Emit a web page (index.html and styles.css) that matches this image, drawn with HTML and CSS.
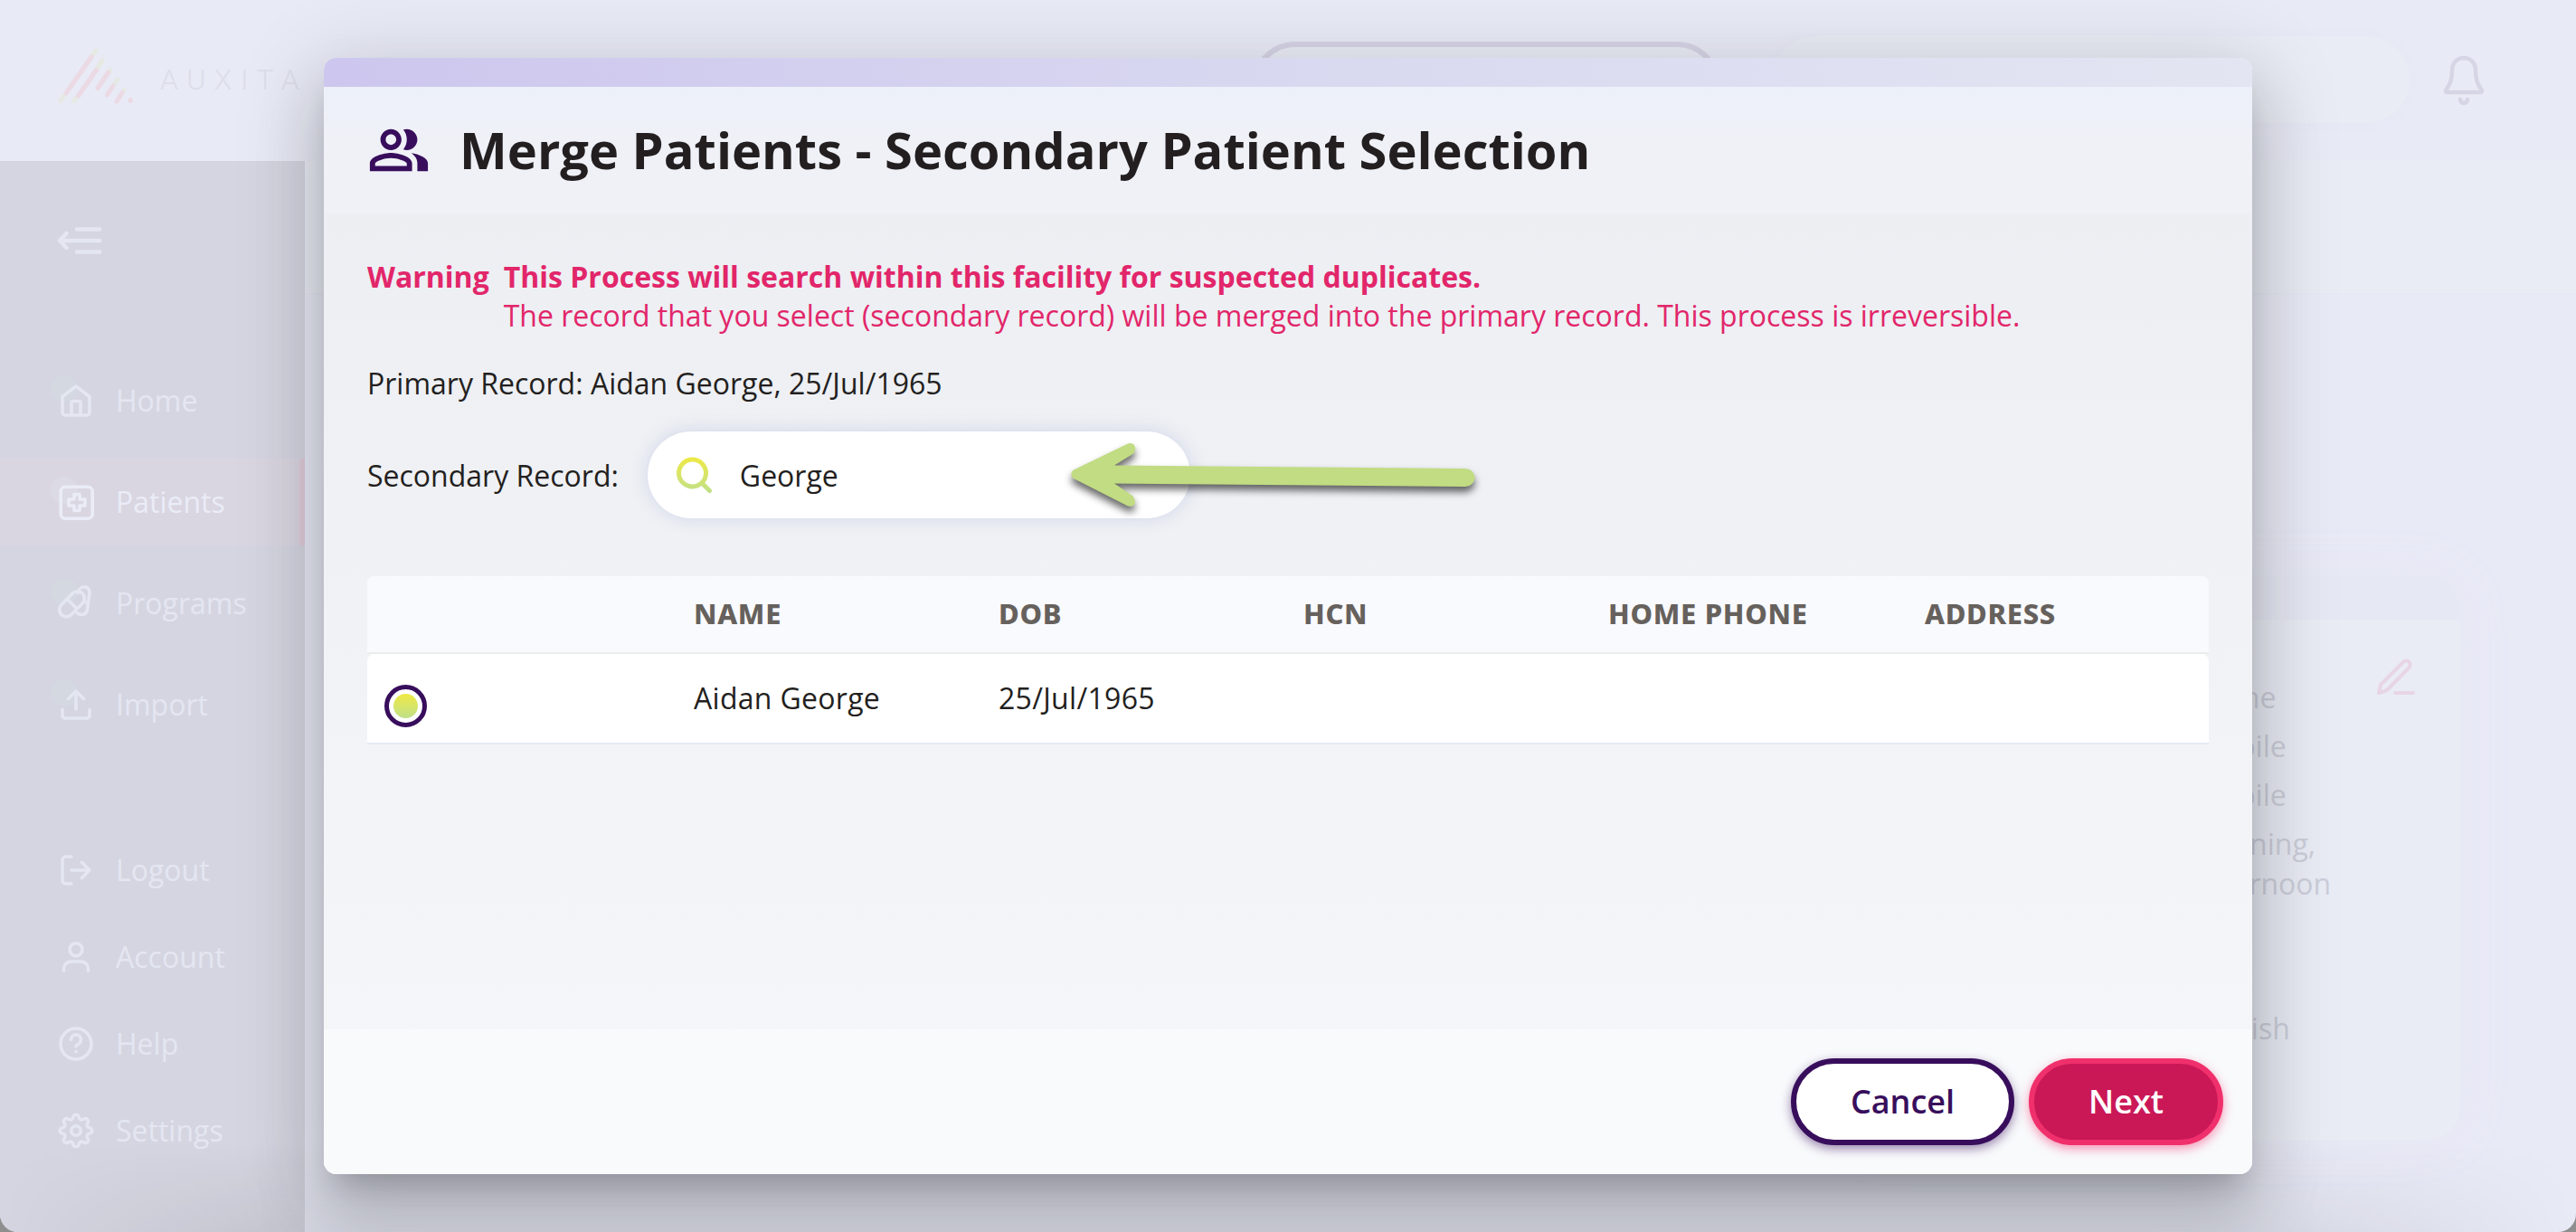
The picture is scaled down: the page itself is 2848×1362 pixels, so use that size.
FILE: index.html
```html
<!DOCTYPE html>
<html lang="en">
<head>
    <meta charset="UTF-8">
    <meta name="viewport" content="width=device-width, initial-scale=1.0">
    <title>Merge Patients</title>
    <link rel="stylesheet" href="styles.css">
</head>
<body>

    <div class="app">
        <!-- Top bar -->
        <header class="topbar">
            <div class="logo">
                <svg class="logo-mark" width="88" height="66" viewBox="64 52 88 66">
                    <g class="logo-yellow">
                        <path d="M67 111.5l3-5.500M102.500 61l3.500-5M82 111.500l2-3.500M107.500 75l6-8.500M120.500 79.500l1.500-2M126.500 93l3.500-5M136 101.500l1-2"/>
                    </g>
                    <g class="logo-pink">
                        <path d="M73 103l28-40M86.500 106l20-28.500M108 97.500l11.500-17M118.500 105l6.500-10M129 112l6-9.500M144.300 110.500v1"/>
                    </g>
                </svg>
                <span class="logo-text">AUXITA</span>
            </div>
            <div class="facility-button"></div>
            <div class="top-search"></div>
            <svg class="bell" width="48" height="56" viewBox="0 0 48 56">
                <path d="M24 4c-8 0-13 6-13 14 0 10-2 15-7 22 0 1.500.5 2 2 2h36c1.500 0 2-.5 2-2-5-7-7-12-7-22 0-8-5-14-13-14z"/>
                <path d="M20 50a4 4 0 0 0 8 0"/>
            </svg>
        </header>

        <div class="main">
            <!-- Sidebar -->
            <nav class="sidebar">
                <svg class="collapse" width="50" height="32" viewBox="0 0 50 32">
                    <path d="M3 16h44M22 3.500h25M22 28.500h25M10.500 8L3 16l7.500 8"/>
                </svg>
                <div class="nav-group">
                    <a class="nav-item">
                        <svg class="nav-icon" viewBox="0 0 48 48">
                            <circle class="blob" cx="11" cy="11" r="15"/>
                            <path d="M9 19.500L24 8l15 11.500V37a3 3 0 0 1-3 3H12a3 3 0 0 1-3-3zM19 40V26a1.500 1.500 0 0 1 1.500-1.500h7A1.500 1.500 0 0 1 29 26v14"/>
                        </svg>
                        <span>Home</span>
                    </a>
                    <a class="nav-item active">
                        <svg class="nav-icon" viewBox="0 0 48 48">
                            <circle class="blob" cx="11" cy="11" r="15"/>
                            <rect x="7.200" y="7.200" width="35" height="35" rx="5"/>
                            <path d="M22 15.500h6V21h6v7h-6v5.500h-6V28h-6v-7h6z"/>
                        </svg>
                        <span>Patients</span>
                    </a>
                    <a class="nav-item">
                        <svg class="nav-icon" viewBox="0 0 48 48">
                            <circle class="blob" cx="11" cy="11" r="15"/>
                            <rect x="3" y="17" width="33" height="15.500" rx="7.750" transform="rotate(-45 19.500 24.750)"/>
                            <path d="M14.500 19.500l10.500 10.500M26 12.500c1.500-5 5-7.500 8.500-6.500 3.500 1 5 4 4.500 7l-2.500 18c-1 6-7 7-11.500 3.500M32.500 22.500l5 .8"/>
                        </svg>
                        <span>Programs</span>
                    </a>
                    <a class="nav-item">
                        <svg class="nav-icon" viewBox="0 0 48 48">
                            <circle class="blob" cx="11" cy="11" r="15"/>
                            <path d="M24 29V9M15.500 17.500L24 9l8.500 8.500M9 29.500V36a3 3 0 0 0 3 3h24a3 3 0 0 0 3-3v-6.500"/>
                        </svg>
                        <span>Import</span>
                    </a>
                </div>
                <div class="nav-group nav-bottom">
                    <a class="nav-item">
                        <svg class="nav-icon" viewBox="0 0 48 48">
                            <path d="M19 9h-6a4 4 0 0 0-4 4v22a4 4 0 0 0 4 4h6M19 24h20M30.500 15.500L39 24l-8.500 8.500"/>
                        </svg>
                        <span>Logout</span>
                    </a>
                    <a class="nav-item">
                        <svg class="nav-icon" viewBox="0 0 48 48">
                            <circle cx="24" cy="15.700" r="7"/>
                            <path d="M10.500 39v-2a8 8 0 0 1 8-8h11a8 8 0 0 1 8 8v2"/>
                        </svg>
                        <span>Account</span>
                    </a>
                    <a class="nav-item">
                        <svg class="nav-icon" viewBox="0 0 48 48">
                            <circle cx="24" cy="24" r="17"/>
                            <path d="M18.500 19.500a5.500 5.500 0 1 1 8.500 4.500c-2 1.200-3 2-3 3M24 32.500v.1"/>
                        </svg>
                        <span>Help</span>
                    </a>
                    <a class="nav-item">
                        <svg class="nav-icon" viewBox="-24 -24 48 48">
                            <circle r="5.200"/>
                            <path d="M-3.300-14.500A3.300 3.300 0 0 1 3.300-14.500A2.900 2.900 0 0 0 7.920-12.590A3.300 3.300 0 0 1 12.590-7.920A2.900 2.900 0 0 0 14.500-3.300A3.300 3.300 0 0 1 14.500 3.300A2.900 2.900 0 0 0 12.590 7.920A3.300 3.300 0 0 1 7.920 12.590A2.900 2.900 0 0 0 3.300 14.500A3.300 3.300 0 0 1-3.300 14.500A2.900 2.900 0 0 0-7.920 12.590A3.300 3.300 0 0 1-12.590 7.920A2.900 2.900 0 0 0-14.500 3.300A3.300 3.300 0 0 1-14.500-3.300A2.900 2.900 0 0 0-12.590-7.920A3.300 3.300 0 0 1-7.920-12.590A2.900 2.900 0 0 0-3.300-14.500z"/>
                        </svg>
                        <span>Settings</span>
                    </a>
                </div>
            </nav>

            <!-- Page content behind the dialog -->
            <div class="content">
                <div class="patient-bar"></div>
                <div class="patient-card">
                    <div class="card-strip"></div>
                    <div class="card-body">
                        <div class="card-values">
                            <p>Home</p>
                            <p>Mobile</p>
                            <p>Mobile</p>
                            <p>Morning,<br>Afternoon</p>
                            <p class="language">English</p>
                        </div>
                        <svg class="edit" width="44" height="44" viewBox="0 0 44 44">
                            <path d="M4 40l2-9L31 6c2-2 5-2 6.500 0s1.500 4 0 6L14 36c-2 2-6 3-10 4zM22 40h20"/>
                        </svg>
                    </div>
                </div>
            </div>
        </div>
    </div>

    <!-- Dialog -->
    <div class="dialog">
        <div class="dialog-strip"></div>
        <div class="dialog-header">
            <svg class="people" width="70" height="70" viewBox="0 0 24 24">
                <path d="M16.670 13.130C18.040 14.060 19 15.320 19 17v3h4v-3c0-2.180-3.570-3.470-6.330-3.870z"/>
                <path d="M15 12c2.210 0 4-1.790 4-4s-1.790-4-4-4c-.47 0-.91.1-1.330.24C14.500 5.270 15 6.580 15 8s-.5 2.730-1.330 3.760c.42.14.86.24 1.330.24z"/>
                <path d="M9 12c2.210 0 4-1.790 4-4s-1.790-4-4-4-4 1.790-4 4 1.790 4 4 4zm0-6c1.100 0 2 .9 2 2s-.9 2-2 2-2-.9-2-2 .9-2 2-2zM9 13c-2.670 0-8 1.340-8 4v3h16v-3c0-2.660-5.330-4-8-4zm6 5H3v-.99C3.200 16.290 6.300 15 9 15s5.800 1.290 6 2v1z"/>
            </svg>
            <h1>Merge Patients - Secondary Patient Selection</h1>
        </div>

        <div class="dialog-body">
            <div class="warning">
                <strong>Warning</strong>
                <div>
                    <strong>This Process will search within this facility for suspected duplicates.</strong><br>
                    The record that you select (secondary record) will be merged into the primary record. This process is irreversible.
                </div>
            </div>
            <div class="primary">Primary Record: Aidan George, 25/Jul/1965</div>
            <div class="secondary">
                <span class="label">Secondary Record:</span>
                <div class="search">
                    <svg width="40" height="40" viewBox="0 0 40 40">
                        <defs>
                            <linearGradient id="lime" x1="0" y1="0" x2="0" y2="40" gradientUnits="userSpaceOnUse">
                                <stop offset="0" stop-color="#f0e944"/>
                                <stop offset="1" stop-color="#bfe08a"/>
                            </linearGradient>
                        </defs>
                        <path d="M17.500 3a15 15 0 1 1 0 30a15 15 0 1 1 0-30zM28.500 29.500l8 8" fill="none" stroke="url(#lime)" stroke-width="5" stroke-linecap="round"/>
                    </svg>
                    <span class="label">George</span>
                </div>
            </div>

            <div class="table">
                <div class="row head">
                    <span></span>
                    <span>NAME</span>
                    <span>DOB</span>
                    <span>HCN</span>
                    <span>HOME PHONE</span>
                    <span>ADDRESS</span>
                </div>
                <div class="row">
                    <span class="radio"></span>
                    <span>Aidan George</span>
                    <span>25/Jul/1965</span>
                    <span></span>
                    <span></span>
                    <span></span>
                </div>
            </div>
        </div>

        <div class="dialog-footer">
            <button class="cancel">Cancel</button>
            <button class="next">Next</button>
        </div>
    </div>

    <!-- Arrow pointing at the search box -->
    <svg class="arrow" width="460" height="90" viewBox="1180 482 460 90">
        <path d="M1187 519.500L1247 490.500C1254 488 1258 496 1253 501.500L1232 514.500L1620 518C1634 519 1634 537 1620 538L1232 534.500L1252 548C1258 555 1254 562 1246 559L1187 529C1183.500 526 1183.500 522 1187 519.500z"/>
    </svg>

</body>
</html>
```
FILE: styles.css
```css
* {
    box-sizing: border-box;
}

body {
    margin: 0;
    height: 1362px;
    overflow: hidden;
    background: #8f8f90;
    font-family: "Open Sans", sans-serif;
    font-size: 32px;
    line-height: 44px;
    color: #231f20;
}

.app {
    position: relative;
    height: 1362px;
    display: flex;
    flex-direction: column;
    background: #e8eaf6;
    border-radius: 0 0 20px 20px;
    overflow: hidden;
}

/* shade along the bottom edge of the window */
.app::after {
    content: '';
    position: absolute;
    left: 0;
    right: 0;
    bottom: 0;
    height: 100px;
    background: linear-gradient(transparent, rgba(0, 0, 0, .07));
    mask-image: linear-gradient(to right, transparent, #000 300px, #000 2548px, transparent);
}

/* Top bar */
.topbar {
    height: 178px;
    flex: none;
    display: flex;
    align-items: flex-start;
    background: #e8eaf6;
}

.logo {
    display: flex;
    width: 1384px;
    padding: 52px 0 0 64px;
}

.logo-mark {
    fill: none;
    stroke-width: 5;
    stroke-linecap: round;
}

.logo-yellow {
    stroke: #e5e9e2;
}

.logo-pink {
    stroke: #ebd9e3;
}

.logo-text {
    margin: 14px 0 0 25px;
    font-family: Roboto, sans-serif;
    font-weight: 300;
    font-size: 32px;
    letter-spacing: 9.5px;
    color: #dcdee8;
}

.facility-button {
    width: 518px;
    height: 96px;
    margin-top: 46px;
    border: 6px solid #d6d4e5;
    border-radius: 48px;
    background: #e9ecf6;
}

.top-search {
    width: 704px;
    height: 96px;
    margin: 40px 0 0 58px;
    border-radius: 48px;
    background: #e9ecf5;
    box-shadow: 0 0 12px #e5e8f3;
}

.bell {
    margin: 60px 0 0 36px;
    fill: none;
    stroke: #d6d5e5;
    stroke-width: 4.5;
    stroke-linecap: round;
}

.main {
    flex: 1;
    display: flex;
}

/* Sidebar */
.sidebar {
    width: 337px;
    flex: none;
    display: flex;
    flex-direction: column;
    background: #d5d5e1;
    color: #e4e6f1;
}

.collapse {
    margin: 72px 0 0 63px;
    fill: none;
    stroke: #e4e6f1;
    stroke-width: 4.5;
    stroke-linecap: round;
    stroke-linejoin: round;
}

.nav-group {
    display: flex;
    flex-direction: column;
    gap: 16px;
    margin-top: 113px;
}

.nav-bottom {
    gap: 0;
    margin-top: 87px;
}

.nav-item {
    height: 96px;
    display: flex;
    align-items: center;
    gap: 20px;
    padding-left: 60px;
}

.nav-item.active {
    background: #d9d6e1;
    border-right: 6px solid #e0cdda;
    color: #eaecf7;
}

.nav-icon {
    width: 48px;
    height: 48px;
    overflow: visible;
    fill: none;
    stroke: currentColor;
    stroke-width: 3.6;
    stroke-linecap: round;
    stroke-linejoin: round;
}

.nav-icon .blob {
    fill: #d3d8e1;
    stroke: none;
}

.active .blob {
    fill: #dcdbe5;
}

/* Content */
.content {
    flex: 1;
    display: flex;
    flex-direction: column;
    align-items: flex-end;
}

.patient-bar {
    width: 100%;
    height: 148px;
    background: #e9ecf5;
    border-bottom: 2px solid #e7e9f4;
}

.patient-card {
    width: 700px;
    height: 623px;
    margin: 311px 128px 0 0;
    border-radius: 36px;
    overflow: hidden;
    background: #e9ecf5;
    box-shadow: 0 0 60px #e6e8f4;
}

.card-strip {
    height: 48px;
    background: #e6e8f4;
}

.card-body {
    display: flex;
    justify-content: space-between;
    padding: 41px 50px 0 406px;
}

.card-values {
    margin-top: 23px;
    color: #ccceda;
}

.card-values p {
    margin: 0 0 10px;
}

.card-values .language {
    margin-top: 116px;
}

.edit {
    fill: none;
    stroke: #e8d5e3;
    stroke-width: 4;
    stroke-linecap: round;
    stroke-linejoin: round;
}

/* Dialog */
.dialog {
    position: absolute;
    left: 358px;
    top: 64px;
    width: 2132px;
    height: 1234px;
    display: flex;
    flex-direction: column;
    border-radius: 14px;
    background: linear-gradient(#ebedf2, #f6f7f9);
    box-shadow: 0 22px 30px -14px rgba(0, 0, 0, .2),
                0 48px 76px 6px rgba(0, 0, 0, .14),
                0 18px 92px 16px rgba(0, 0, 0, .12);
}

.dialog-strip {
    height: 32px;
    border-radius: 14px 14px 0 0;
    background: linear-gradient(to right, #cdc6ee, #d8d8f0 50%, #e3e5f2);
}

.dialog-header {
    height: 140px;
    display: flex;
    align-items: flex-start;
    padding: 35px 48px 0;
    background: linear-gradient(#ecf0f9, #eff1f7 40%, #f0f1f7);
}

.people {
    fill: #380e5c;
}

.dialog-header h1 {
    margin: -4px 0 0 32px;
    font-size: 56px;
    line-height: 76px;
    font-weight: 700;
}

.dialog-body {
    flex: 1;
    padding: 48px 48px 0;
}

.warning {
    display: flex;
    gap: 16px;
    line-height: 43px;
    color: #e2266a;
}

.primary {
    margin-top: 32px;
}

.secondary {
    display: flex;
    align-items: center;
    gap: 32px;
    margin-top: 31px;
}

.label {
    padding-top: 2px;
}

.search {
    width: 600px;
    height: 96px;
    display: flex;
    align-items: center;
    gap: 30px;
    padding-left: 32px;
    border-radius: 48px;
    background: #fff;
    box-shadow: 0 0 20px rgba(190, 200, 225, .65);
}

.table {
    margin-top: 64px;
}

.row {
    height: 100px;
    display: grid;
    grid-template-columns: 361px 337px 337px 337px 350px 1fr;
    align-items: center;
    border-bottom: 2px solid #e5e9f5;
    border-radius: 8px 8px 0 0;
    background: #fff;
    letter-spacing: .3px;
}

.row.head {
    height: 86px;
    padding-bottom: 2px;
    border-bottom-color: #ebedea;
    background: #f9fafd;
    font-family: "Noto Sans", sans-serif;
    font-size: 31px;
    font-weight: 800;
    letter-spacing: .7px;
    color: #66615d;
}

.radio {
    width: 47px;
    height: 47px;
    margin: 17px 0 0 19px;
    border: 5px solid #380e5c;
    border-radius: 50%;
    background: linear-gradient(#f0e944, #bfe08a) content-box #fff;
    padding: 5px;
}

.dialog-footer {
    height: 160px;
    display: flex;
    justify-content: flex-end;
    gap: 16px;
    padding: 32px 32px 0;
    border-radius: 0 0 14px 14px;
    background: #f9fafc;
}

.dialog-footer button {
    height: 96px;
    padding: 0 0 1px;
    border-radius: 48px;
    font-family: inherit;
    font-size: 36px;
    font-weight: 600;
}

.dialog-footer .cancel {
    width: 247px;
    border: 6px solid #380e5c;
    background: #fff;
    color: #380e5c;
    box-shadow: 0 4px 12px rgba(56, 14, 92, .5);
}

.dialog-footer .next {
    width: 215px;
    border: 6px solid #f0306c;
    background: #ca1857;
    color: #fff;
    box-shadow: 0 4px 12px rgba(240, 48, 108, .5);
}

.arrow {
    position: absolute;
    left: 1180px;
    top: 482px;
    overflow: visible;
    fill: #c1dc82;
    filter: drop-shadow(0 6px 4px rgba(0, 0, 0, .6));
}
```
